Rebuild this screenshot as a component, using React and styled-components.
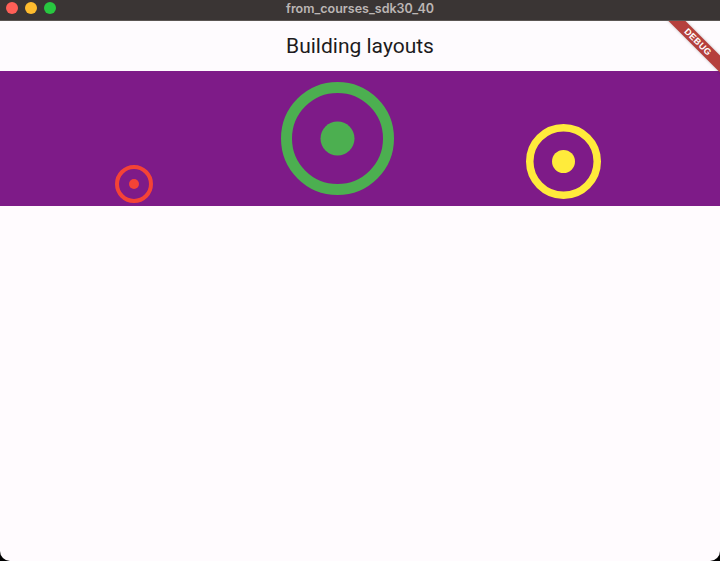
import React from "react";
import styled, { createGlobalStyle } from "styled-components";

const Global = createGlobalStyle`
  html, body { margin: 0; padding: 0; background: #000; }
  body { width: 720px; height: 561px; overflow: hidden; }
`;

const Window = styled.div`
  width: 720px;
  height: 561px;
  display: flex;
  flex-direction: column;
  background: #fffbfe;
  border-radius: 0 0 10px 10px;
  overflow: hidden;
`;

const TitleBar = styled.div`
  height: 21px;
  flex: none;
  background: #3a3534;
  position: relative;
  display: flex;
  align-items: center;
  justify-content: center;
  border-bottom: 1px solid #5a5553;
  box-sizing: border-box;
`;

const Lights = styled.div`
  position: absolute;
  left: 6px;
  top: 2px;
  display: flex;
  gap: 7px;
`;

const Light = styled.span`
  width: 12px;
  height: 12px;
  border-radius: 50%;
  background: ${(p) => p.$c};
`;

const WinTitle = styled.div`
  font-family: "Inter", "Liberation Sans", sans-serif;
  font-weight: 600;
  font-size: 12.5px;
  color: #bcb6b4;
  margin-top: -3px;
`;

const View = styled.div`
  flex: 1;
  position: relative;
  overflow: hidden;
  display: flex;
  flex-direction: column;
`;

const AppBar = styled.div`
  height: 50px;
  flex: none;
  background: #fefbfe;
  display: flex;
  align-items: center;
  justify-content: center;
`;

const AppTitle = styled.h1`
  margin: 0;
  font-family: "Roboto", "Liberation Sans", sans-serif;
  font-weight: 400;
  font-size: 21px;
  color: #1d1b20;
`;

const Band = styled.div`
  height: 135px;
  flex: none;
  background: #7e1b88;
  display: flex;
  align-items: flex-start;
`;

const Slot = styled.div`
  margin-left: ${(p) => p.$ml}px;
  margin-top: ${(p) => p.$mt}px;
  width: ${(p) => p.$size}px;
  height: ${(p) => p.$size}px;
  flex: none;
  svg { display: block; }
`;

const Ribbon = styled.div`
  position: absolute;
  left: 648px;
  top: 15px;
  width: 100px;
  height: 12px;
  background: #b5403c;
  transform: rotate(45deg);
  display: flex;
  align-items: center;
  justify-content: center;
  font-family: "Liberation Sans", sans-serif;
  font-weight: 700;
  font-size: 9px;
  letter-spacing: 0.4px;
  line-height: 1;
  color: #fff;
  box-shadow: 0 0 3px rgba(0, 0, 0, 0.25);
`;

function Target({ size, stroke, dot, color, ml, mt }) {
  const c = size / 2;
  return (
    <Slot $size={size} $ml={ml} $mt={mt}>
      <svg width={size} height={size} viewBox={`0 0 ${size} ${size}`}>
        <circle cx={c} cy={c} r={c - stroke / 2} fill="none" stroke={color} strokeWidth={stroke} />
        <circle cx={c} cy={c} r={dot} fill={color} />
      </svg>
    </Slot>
  );
}

export default function App() {
  return (
    <>
      <Global />
      <Window>
        <TitleBar>
          <Lights>
            <Light $c="#fe5f57" />
            <Light $c="#febc2e" />
            <Light $c="#28c840" />
          </Lights>
          <WinTitle>from_courses_sdk30_40</WinTitle>
        </TitleBar>
        <View>
          <AppBar>
            <AppTitle>Building layouts</AppTitle>
          </AppBar>
          <Band>
            <Target size={38} stroke={4} dot={5} color="#f44336" ml={115} mt={94} />
            <Target size={113} stroke={11} dot={17} color="#4caf50" ml={128} mt={11} />
            <Target size={75} stroke={7.5} dot={11.5} color="#ffeb3b" ml={132} mt={53} />
          </Band>
          <Ribbon>DEBUG</Ribbon>
        </View>
      </Window>
    </>
  );
}
